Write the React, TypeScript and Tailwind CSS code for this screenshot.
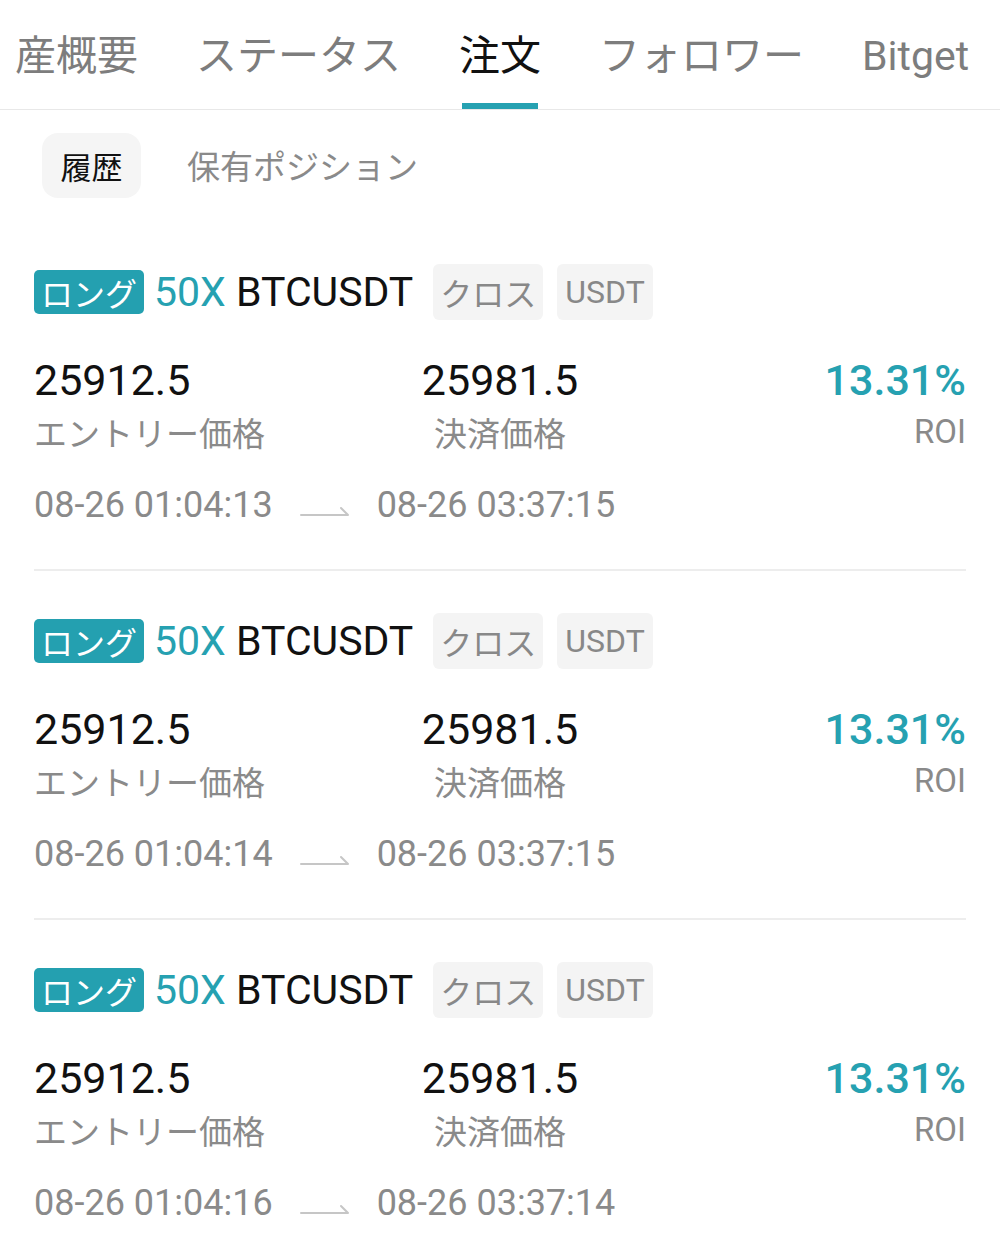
import React from "react";

const JP = "font-['Noto_Sans_CJK_JP',sans-serif]";
const LAT = "font-['Roboto','Noto_Sans_CJK_JP',sans-serif]";

const tabs = [
  { label: "産概要", active: false },
  { label: "ステータス", active: false },
  { label: "注文", active: true },
  { label: "フォロワー", active: false },
  { label: "Bitget", active: false },
];

function Arrow() {
  return (
    <svg width="50" height="12" viewBox="0 0 50 12" className="mx-[27px] mb-[5px] shrink-0">
      <path d="M1 10 H48 L41 3" fill="none" stroke="#c6c6c6" strokeWidth="2" strokeLinecap="round" strokeLinejoin="round" />
    </svg>
  );
}

function Card({ t1, t2, last }: { t1: string; t2: string; last?: boolean }) {
  return (
    <div>
      <div className="flex h-[56px] items-center">
        <span className={`flex h-[44px] items-center rounded-[5px] bg-[#24a0b0] px-[7px] text-[32px] leading-none text-white ${JP}`}>
          ロング
        </span>
        <span className={`ml-[10px] whitespace-pre text-[41px] leading-none ${LAT}`}>
          <span className="text-[#26a1b1]">50X</span>
          <span className="text-[#111111]"> BTCUSDT</span>
        </span>
        <span className={`ml-[20px] flex h-[56px] items-center rounded-[6px] bg-[#f4f4f4] px-[7px] text-[32px] leading-none text-[#888888] ${JP}`}>
          クロス
        </span>
        <span className={`ml-[14px] flex h-[56px] items-center rounded-[6px] bg-[#f4f4f4] px-[8px] text-[32px] leading-none text-[#888888] ${LAT}`}>
          USDT
        </span>
      </div>

      <div className="mt-[35px] grid grid-cols-3">
        <div className="flex flex-col items-start">
          <span className={`text-[43px] leading-[50px] text-[#111111] ${LAT}`}>25912.5</span>
          <span className={`mt-[7px] text-[33px] leading-[40px] text-[#8a8a8a] ${JP}`}>エントリー価格</span>
        </div>
        <div className="flex flex-col items-center">
          <span className={`text-[43px] leading-[50px] text-[#111111] ${LAT}`}>25981.5</span>
          <span className={`mt-[7px] text-[33px] leading-[40px] text-[#8a8a8a] ${JP}`}>決済価格</span>
        </div>
        <div className="flex flex-col items-end">
          <span className={`text-[43px] font-medium leading-[50px] text-[#26a1b1] ${LAT}`}>13.31%</span>
          <span className={`mt-[7px] text-[33px] leading-[40px] text-[#8a8a8a] ${LAT}`}>ROI</span>
        </div>
      </div>

      <div className={`mt-[31px] flex items-baseline text-[36px] leading-[44px] text-[#8a8a8a] ${LAT}`}>
        <span>{t1}</span>
        <Arrow />
        <span>{t2}</span>
      </div>

      {!last && <div className="my-[42px] h-[2px] bg-[#ededed]" />}
    </div>
  );
}

export default function App() {
  return (
    <div className="min-h-[1259px] w-[1000px] overflow-hidden bg-white">
      <div className="flex h-[110px] gap-[58px] border-b border-[#e8e8e8] pl-[15px]">
        {tabs.map((t) => (
          <div key={t.label} className="flex h-full flex-col items-center">
            <span
              className={
                t.active
                  ? `whitespace-nowrap pt-[36px] text-[41px] leading-none text-[#111111] ${LAT}`
                  : `whitespace-nowrap pt-[36px] text-[41px] leading-none text-[#7d7d7d] ${LAT}`
              }
            >
              {t.label}
            </span>
            {t.active && <div className="mt-auto h-[6px] w-[76px] bg-[#26a1b1]" />}
          </div>
        ))}
      </div>

      <div className="mt-[23px] flex items-center pl-[42px]">
        <div className={`flex h-[65px] w-[99px] items-center justify-center rounded-[16px] bg-[#f5f5f5] text-[31px] leading-none text-[#111111] ${JP}`}>
          履歴
        </div>
        <span className={`ml-[46px] text-[33px] leading-none text-[#8a8a8a] ${JP}`}>保有ポジション</span>
      </div>

      <div className="mt-[66px] px-[34px]">
        <Card t1="08-26 01:04:13" t2="08-26 03:37:15" />
        <Card t1="08-26 01:04:14" t2="08-26 03:37:15" />
        <Card t1="08-26 01:04:16" t2="08-26 03:37:14" last />
      </div>
    </div>
  );
}
